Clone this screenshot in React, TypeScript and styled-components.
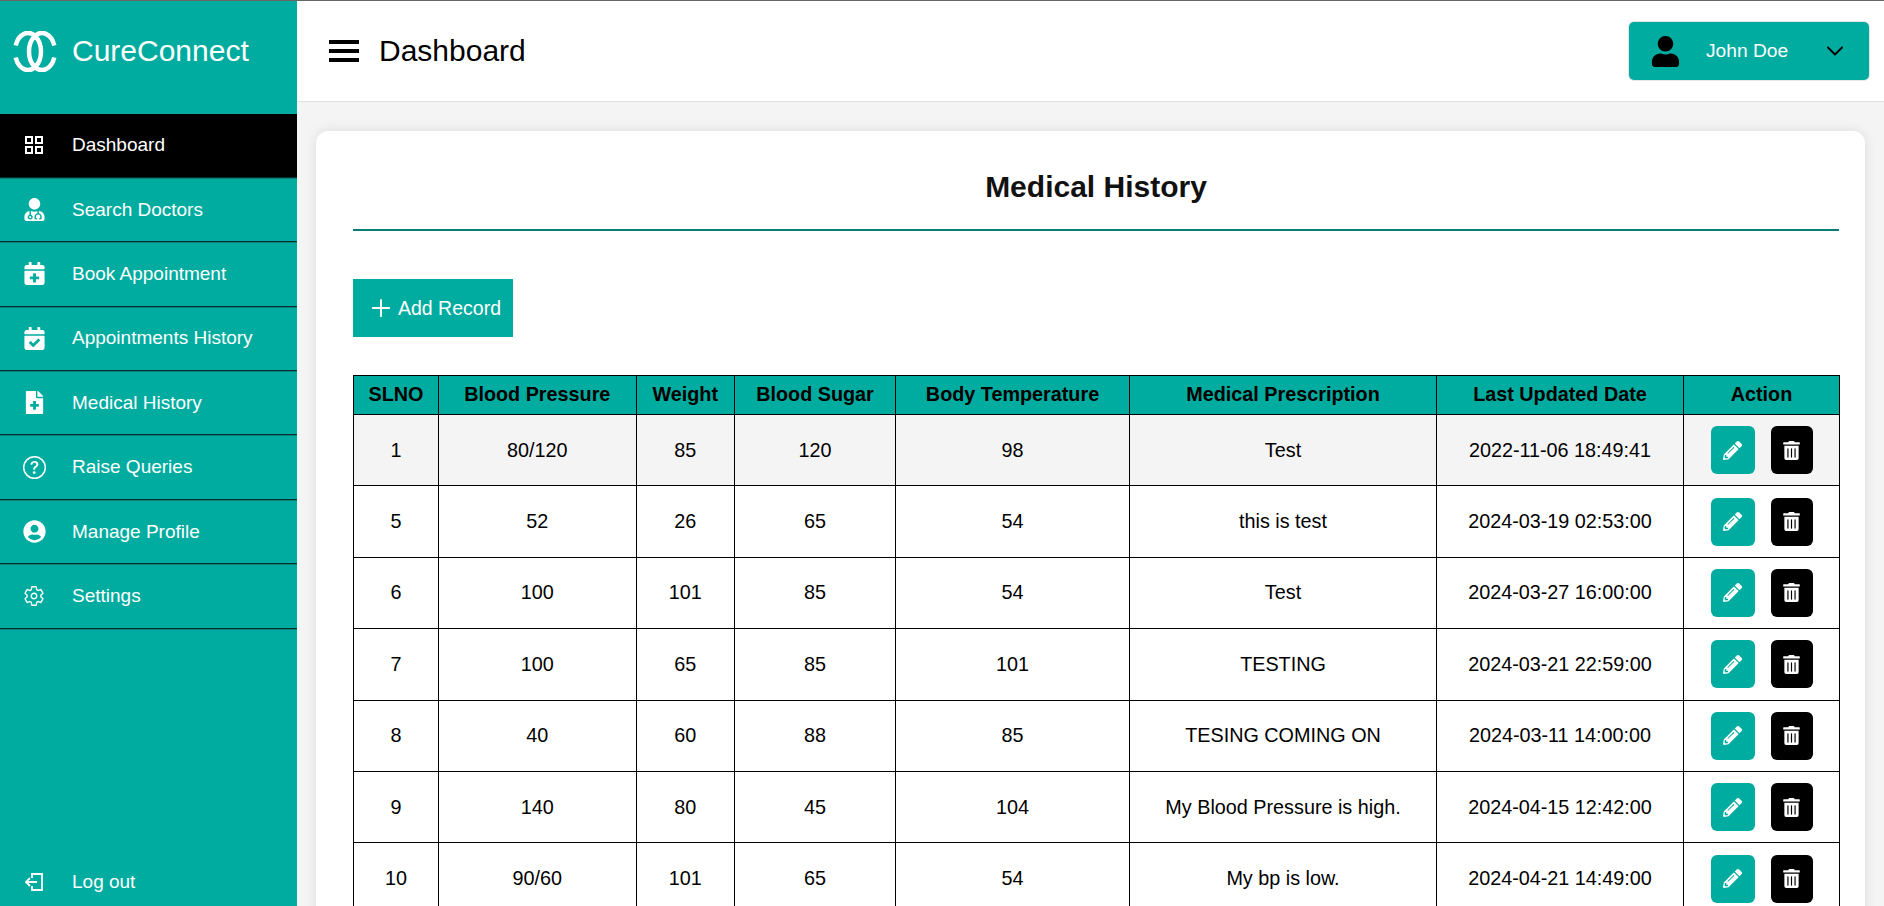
import { ReactNode } from 'react';
import styled, { createGlobalStyle } from 'styled-components';
import { BsQuestionCircle } from 'react-icons/bs';
import {
  FaCalendarCheck,
  FaCalendarPlus,
  FaFileMedical,
  FaPencilAlt,
  FaTrashAlt,
  FaUser,
  FaUserCircle,
  FaUserMd,
} from 'react-icons/fa';
import { FiChevronDown, FiPlus } from 'react-icons/fi';
import { IoSettingsOutline } from 'react-icons/io5';

const TEAL = '#00ac9f';

type navItem = { label: string; icon: ReactNode; active?: boolean };
type recordType = {
  id: number;
  pressure: string;
  weight: number;
  sugar: number;
  temperature: number;
  prescription: string;
  updated: string;
};

const GridIcon = () => (
  <svg width='18' height='18' viewBox='0 0 18 18' fill='none' stroke='currentColor' strokeWidth='2'>
    <rect x='1' y='1' width='6' height='6' />
    <rect x='11' y='1' width='6' height='6' />
    <rect x='1' y='11' width='6' height='6' />
    <rect x='11' y='11' width='6' height='6' />
  </svg>
);

const LogoutIcon = () => (
  <svg width='20' height='18' viewBox='0 0 20 18' fill='none' stroke='currentColor' strokeWidth='1.8'>
    <path d='M8 5V1h10v16H8v-4' />
    <path d='M13 9H2M6 5L2 9l4 4' />
  </svg>
);

const LogoMark = () => (
  <svg width='44' height='41' viewBox='0 0 44 41' fill='none' stroke='currentColor' strokeWidth='4.5'>
    <path d='M2.7 14.5A13 18.5 0 1 1 2.7 26.5' />
    <path d='M41.3 14.5A13 18.5 0 1 0 41.3 26.5' />
  </svg>
);

const navItems: navItem[] = [
  { label: 'Dashboard', icon: <GridIcon />, active: true },
  { label: 'Search Doctors', icon: <FaUserMd size={23} /> },
  { label: 'Book Appointment', icon: <FaCalendarPlus size={23} /> },
  { label: 'Appointments History', icon: <FaCalendarCheck size={23} /> },
  { label: 'Medical History', icon: <FaFileMedical size={23} /> },
  { label: 'Raise Queries', icon: <BsQuestionCircle size={23} /> },
  { label: 'Manage Profile', icon: <FaUserCircle size={23} /> },
  { label: 'Settings', icon: <IoSettingsOutline size={22} /> },
];

const columns = [
  { title: 'SLNO', width: 85 },
  { title: 'Blood Pressure', width: 197.5 },
  { title: 'Weight', width: 98.5 },
  { title: 'Blood Sugar', width: 161 },
  { title: 'Body Temperature', width: 234 },
  { title: 'Medical Prescription', width: 307 },
  { title: 'Last Updated Date', width: 247 },
  { title: 'Action', width: 156 },
];

const records: recordType[] = [
  { id: 1, pressure: '80/120', weight: 85, sugar: 120, temperature: 98, prescription: 'Test', updated: '2022-11-06 18:49:41' },
  { id: 5, pressure: '52', weight: 26, sugar: 65, temperature: 54, prescription: 'this is test', updated: '2024-03-19 02:53:00' },
  { id: 6, pressure: '100', weight: 101, sugar: 85, temperature: 54, prescription: 'Test', updated: '2024-03-27 16:00:00' },
  { id: 7, pressure: '100', weight: 65, sugar: 85, temperature: 101, prescription: 'TESTING', updated: '2024-03-21 22:59:00' },
  { id: 8, pressure: '40', weight: 60, sugar: 88, temperature: 85, prescription: 'TESING COMING ON', updated: '2024-03-11 14:00:00' },
  { id: 9, pressure: '140', weight: 80, sugar: 45, temperature: 104, prescription: 'My Blood Pressure is high.', updated: '2024-04-15 12:42:00' },
  { id: 10, pressure: '90/60', weight: 101, sugar: 65, temperature: 54, prescription: 'My bp is low.', updated: '2024-04-21 14:49:00' },
];

function App() {
  return (
    <Page>
      <GlobalStyle />
      <Sidebar>
        <Brand>
          <LogoMark />
          <BrandName>CureConnect</BrandName>
        </Brand>
        <nav>
          {navItems.map((item) => (
            <NavRow key={item.label} $active={item.active}>
              <NavIcon>{item.icon}</NavIcon>
              {item.label}
            </NavRow>
          ))}
        </nav>
        <LogoutRow>
          <NavIcon>
            <LogoutIcon />
          </NavIcon>
          Log out
        </LogoutRow>
      </Sidebar>
      <Main>
        <Topbar>
          <TopbarLeft>
            <MenuButton aria-label='menu'>
              <span />
              <span />
              <span />
            </MenuButton>
            <PageTitle>Dashboard</PageTitle>
          </TopbarLeft>
          <UserButton>
            <FaUser size={31} color='#000' />
            <UserName>John Doe</UserName>
            <FiChevronDown size={28} strokeWidth={1.6} color='#000' />
          </UserButton>
        </Topbar>
        <Content>
          <Card>
            <CardTitle>Medical History</CardTitle>
            <AddButton>
              <FiPlus size={28} strokeWidth={1.6} />
              Add Record
            </AddButton>
            <RecordTable>
              <colgroup>
                {columns.map((col) => (
                  <col key={col.title} width={col.width} />
                ))}
              </colgroup>
              <thead>
                <tr>
                  {columns.map((col) => (
                    <HeadCell key={col.title}>{col.title}</HeadCell>
                  ))}
                </tr>
              </thead>
              <tbody>
                {records.map((record, index) => (
                  <BodyRow key={record.id} $shaded={index === 0}>
                    <BodyCell>{record.id}</BodyCell>
                    <BodyCell>{record.pressure}</BodyCell>
                    <BodyCell>{record.weight}</BodyCell>
                    <BodyCell>{record.sugar}</BodyCell>
                    <BodyCell>{record.temperature}</BodyCell>
                    <BodyCell>{record.prescription}</BodyCell>
                    <BodyCell>{record.updated}</BodyCell>
                    <BodyCell>
                      <Actions>
                        <EditButton aria-label='edit'>
                          <FaPencilAlt size={19} />
                        </EditButton>
                        <DeleteButton aria-label='delete'>
                          <FaTrashAlt size={19} />
                        </DeleteButton>
                      </Actions>
                    </BodyCell>
                  </BodyRow>
                ))}
              </tbody>
            </RecordTable>
          </Card>
        </Content>
      </Main>
    </Page>
  );
}

const GlobalStyle = createGlobalStyle`
  html, body {
    margin: 0;
    height: 100%;
    overflow: hidden;
    font-family: 'Liberation Sans', Arial, sans-serif;
  }
  * {
    box-sizing: border-box;
  }
`;
const Page = styled.div`
  display: flex;
  height: 906px;
  overflow: hidden;
  border-top: 1px solid #666;
  background: #f4f4f4;
`;
const Sidebar = styled.aside`
  display: flex;
  flex-direction: column;
  flex: 0 0 297px;
  background: ${TEAL};
  color: #fff;
`;
const Brand = styled.div`
  display: flex;
  align-items: center;
  gap: 15px;
  height: 112.5px;
  padding: 0 0 12px 13px;
`;
const BrandName = styled.span`
  font-size: 30px;
`;
const NavRow = styled.a<{ $active?: boolean }>`
  display: flex;
  align-items: center;
  height: 64.4px;
  padding-left: 22px;
  font-size: 19px;
  color: #fff;
  background: ${({ $active }) => ($active ? '#000' : 'transparent')};
  border-bottom: 1px solid #07302d;
  box-shadow: 0 1px 0 #0a8479;
`;
const NavIcon = styled.span`
  display: flex;
  align-items: center;
  justify-content: center;
  flex: 0 0 24px;
  margin-right: 26px;
`;
const LogoutRow = styled.a`
  display: flex;
  align-items: center;
  margin-top: auto;
  height: 48px;
  padding-left: 22px;
  font-size: 19px;
  color: #fff;
`;
const Main = styled.main`
  display: flex;
  flex-direction: column;
  flex: 1;
  min-width: 0;
`;
const Topbar = styled.header`
  display: flex;
  align-items: center;
  justify-content: space-between;
  flex: 0 0 101px;
  padding: 0 15px 0 32px;
  background: #fff;
  border-bottom: 1px solid #e0e0e0;
`;
const TopbarLeft = styled.div`
  display: flex;
  align-items: center;
  gap: 20px;
`;
const MenuButton = styled.div`
  display: flex;
  flex-direction: column;
  gap: 5px;
  width: 30px;
  span {
    display: block;
    height: 4px;
    background: #000;
  }
`;
const PageTitle = styled.h1`
  margin: 0;
  font-size: 30px;
  font-weight: 400;
  color: #000;
`;
const UserButton = styled.div`
  display: flex;
  align-items: center;
  width: 240px;
  height: 58px;
  padding: 0 20px 0 21px;
  border-radius: 5px;
  background: ${TEAL};
  box-shadow: 0 0 0 1px #e6e6e6;
`;
const UserName = styled.span`
  flex: 1;
  padding-left: 25px;
  font-size: 19.2px;
  color: #fff;
`;
const Content = styled.div`
  flex: 1;
  min-height: 0;
  overflow: hidden;
  padding: 29px 19px 0;
`;
const Card = styled.section`
  padding: 0 26px 40px 37px;
  border-radius: 12px;
  background: #fff;
  box-shadow: 0 0 12px rgba(0, 0, 0, 0.1);
`;
const CardTitle = styled.h2`
  height: 100px;
  margin: 0 0 48px;
  padding-top: 37px;
  line-height: 38px;
  border-bottom: 2px solid #0a7d73;
  font-size: 30px;
  font-weight: 700;
  text-align: center;
  color: #111;
`;
const AddButton = styled.button`
  display: flex;
  align-items: center;
  gap: 3px;
  width: 160px;
  height: 58px;
  padding: 0 0 0 14px;
  border: none;
  background: ${TEAL};
  font-family: inherit;
  font-size: 19.5px;
  white-space: nowrap;
  color: #fff;
`;
const RecordTable = styled.table`
  width: 1486px;
  margin-top: 38px;
  table-layout: fixed;
  border-collapse: collapse;
  font-size: 19.8px;
  color: #000;
`;
const HeadCell = styled.th`
  height: 39px;
  padding: 0 0 2px;
  border: 1px solid #000;
  background: ${TEAL};
  font-weight: 700;
  text-align: center;
`;
const BodyRow = styled.tr<{ $shaded?: boolean }>`
  height: 71.4px;
  background: ${({ $shaded }) => ($shaded ? '#f4f4f4' : '#fff')};
`;
const BodyCell = styled.td`
  padding: 0;
  border: 1px solid #000;
  text-align: center;
`;
const Actions = styled.div`
  display: flex;
  justify-content: center;
  gap: 16px;
`;
const EditButton = styled.button`
  display: flex;
  align-items: center;
  justify-content: center;
  width: 44px;
  height: 48px;
  padding: 0;
  border: none;
  border-radius: 6px;
  background: ${TEAL};
  color: #fff;
`;
const DeleteButton = styled(EditButton)`
  width: 42px;
  background: #000;
`;

export default App;
